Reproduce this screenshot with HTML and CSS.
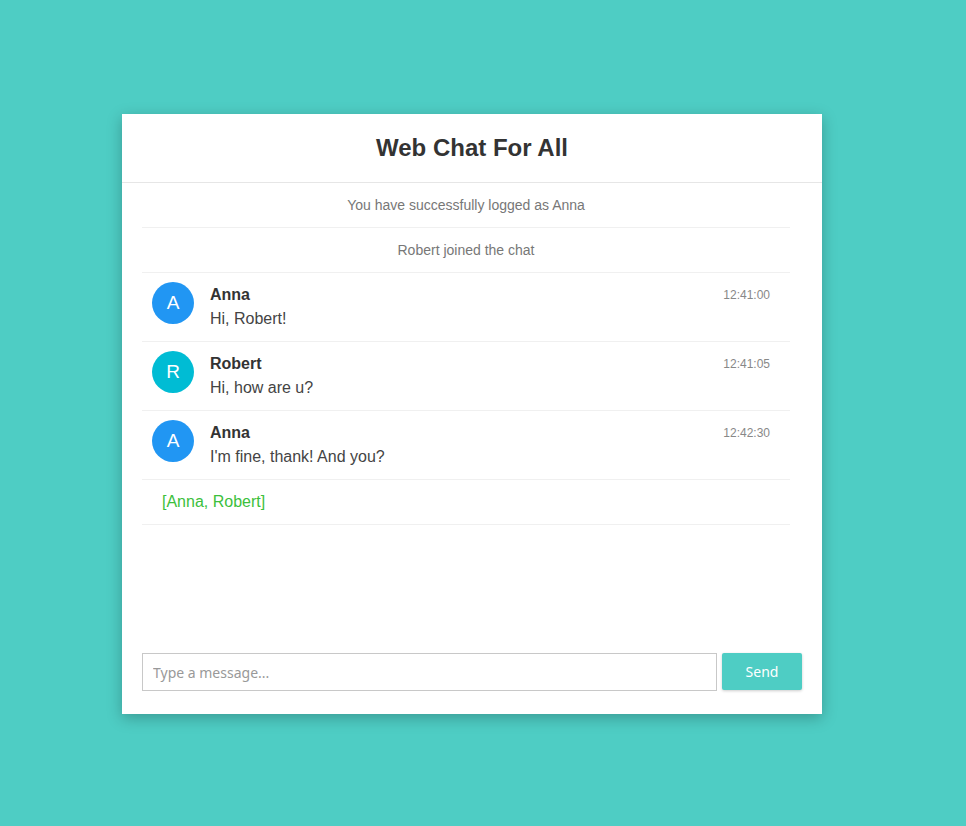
FILE: index.html
```html
<!DOCTYPE html>
<html>
<head>
<meta charset="utf-8">
<link rel="stylesheet" href="styles.css">
</head>
<body>
<div class="card">
  <header class="header"><h1>Web Chat For All</h1></header>
  <div class="messages">
    <ul class="list">
      <li class="sys">You have successfully logged as Anna</li>
      <li class="sys">Robert joined the chat</li>
      <li class="msg">
        <span class="avatar a">A</span>
        <div class="body"><div class="top"><span class="name">Anna</span><span class="time">12:41:00</span></div><p>Hi, Robert!</p></div>
      </li>
      <li class="msg">
        <span class="avatar r">R</span>
        <div class="body"><div class="top"><span class="name">Robert</span><span class="time">12:41:05</span></div><p>Hi, how are u?</p></div>
      </li>
      <li class="msg">
        <span class="avatar a">A</span>
        <div class="body"><div class="top"><span class="name">Anna</span><span class="time">12:42:30</span></div><p>I'm fine, thank! And you?</p></div>
      </li>
      <li class="users">[Anna, Robert]</li>
    </ul>
  </div>
  <form class="form">
    <input class="input" type="text" placeholder="Type a message...">
    <button class="send" type="button">Send</button>
  </form>
</div>
</body>
</html>
```
FILE: styles.css
```css
html, body { margin: 0; padding: 0; }
body {
  background: #4ecdc4;
  font-family: "Liberation Sans", Arial, sans-serif;
  min-height: 826px;
  padding-top: 114px;
  box-sizing: border-box;
}
.card {
  margin-left: 122px;
  width: 700px;
  height: 600px;
  background: #fff;
  box-shadow: 0 4px 14px rgba(0,0,0,0.25);
  display: flex;
  flex-direction: column;
}
.header {
  height: 68px;
  border-bottom: 1px solid #e6e6e6;
  display: flex;
  align-items: center;
  justify-content: center;
}
.header h1 {
  margin: 0;
  font-size: 24px;
  font-weight: bold;
  color: #333;
}
.messages { flex: 1; padding: 0 32px 0 20px; }
.list { list-style: none; margin: 0; padding: 0; }
.list li { border-bottom: 1px solid #f0f0f0; }
.sys {
  height: 44px;
  display: flex;
  align-items: center;
  justify-content: center;
  font-size: 14px;
  color: #777;
}
.msg {
  height: 68px;
  box-sizing: content-box;
  display: flex;
  align-items: flex-start;
  padding: 0 20px 0 10px;
  gap: 16px;
}
.avatar {
  margin-top: 9px;
  width: 42px; height: 42px;
  border-radius: 50%;
  color: #fff;
  font-size: 19px;
  display: flex; align-items: center; justify-content: center;
  flex: none;
}
.avatar.a { background: #2196f3; }
.avatar.r { background: #00bcd4; }
.body { flex: 1; padding-top: 13px; }
.top { display: flex; justify-content: space-between; align-items: center; height: 18px; }
.name { font-weight: bold; font-size: 16px; color: #333; }
.time { font-size: 12px; color: #888; }
.body p { margin: 6px 0 0; font-size: 16px; line-height: 18px; color: #444; }
.users {
  height: 44px;
  display: flex;
  align-items: center;
  padding-left: 20px;
  font-size: 16px;
  color: #3cc03c;
}
.form {
  display: flex;
  gap: 5px;
  padding: 0 20px 23px;
}
.input {
  flex: 1;
  height: 38px;
  box-sizing: border-box;
  border: 1px solid #c8c8c8;
  padding: 0 10px;
  font-family: "Noto Sans", sans-serif;
  font-size: 14px;
  color: #333;
  outline: none;
}
.input::placeholder { color: #999; }
.send {
  width: 80px;
  height: 37px;
  border: none;
  border-radius: 2px;
  background: #4ecdc4;
  color: #fff;
  font-family: "Noto Sans", sans-serif;
  font-size: 14px;
  box-shadow: 0 1px 3px rgba(0,0,0,0.2);
}
```
